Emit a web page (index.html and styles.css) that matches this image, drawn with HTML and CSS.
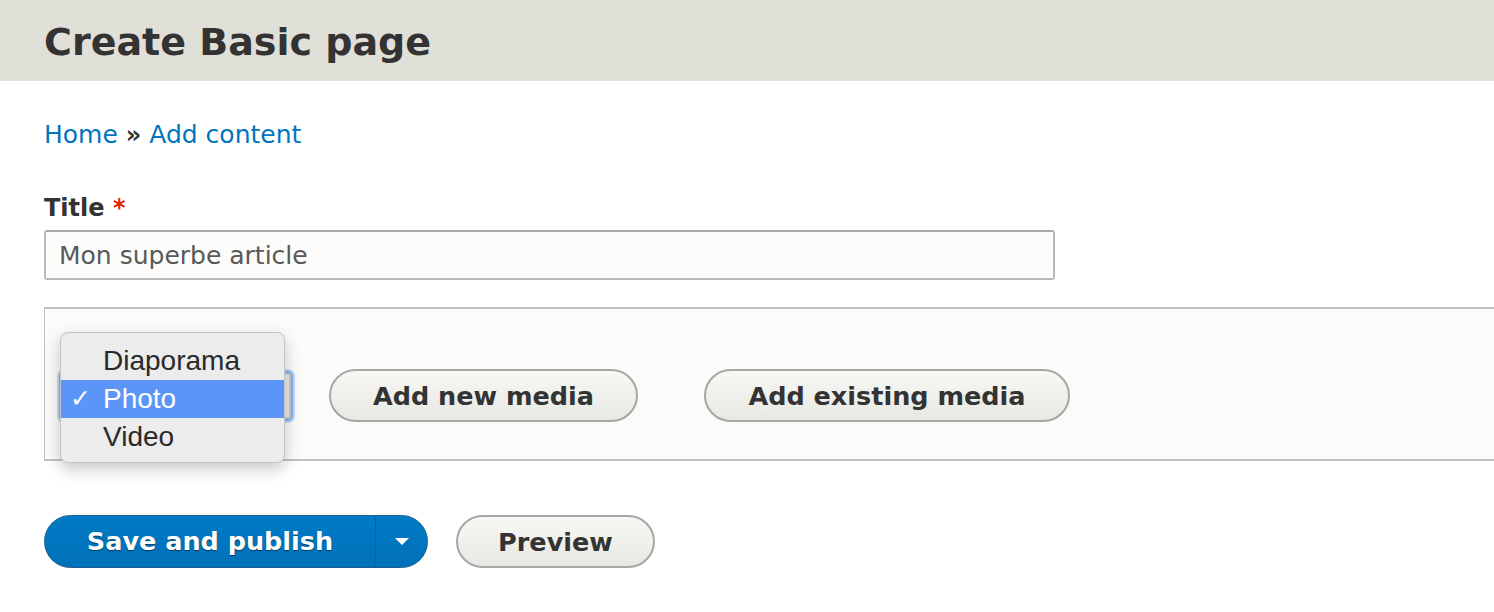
FILE: index.html
```html
<!DOCTYPE html>
<html lang="en">
<head>
<meta charset="utf-8">
<title>Create Basic page</title>
<link rel="stylesheet" href="styles.css">
</head>
<body>
<header class="page-header">
  <h1 class="page-title">Create Basic page</h1>
</header>
<main class="content">
  <nav class="breadcrumb"><a href="#">Home</a> <span class="sep">»</span> <a href="#">Add content</a></nav>
  <div class="form-item">
    <label class="form-label">Title <span class="required">*</span></label>
    <div class="text-input">Mon superbe article</div>
  </div>
  <div class="media-panel">
    <div class="media-row">
      <div class="fake-select"></div>
      <button class="btn">Add new media</button>
      <button class="btn btn-existing">Add existing media</button>
    </div>
    <ul class="popup-menu">
      <li class="popup-item">Diaporama</li>
      <li class="popup-item selected"><span class="check">✓</span>Photo</li>
      <li class="popup-item">Video</li>
    </ul>
  </div>
  <div class="actions">
    <div class="split-button">
      <span class="split-main">Save and publish</span>
      <span class="split-toggle"><span class="caret"></span></span>
    </div>
    <button class="btn btn-preview">Preview</button>
  </div>
</main>
</body>
</html>
```
FILE: styles.css
```css
html, body {
  margin: 0;
  padding: 0;
  background: #ffffff;
  overflow: hidden;
}
body {
  font-family: "DejaVu Sans", "Liberation Sans", sans-serif;
  color: #333333;
}
.page-header {
  background: #e0e0d8;
  height: 81px;
  padding-left: 44px;
  box-sizing: border-box;
}
.page-title {
  margin: 0;
  font-size: 38px;
  font-weight: bold;
  line-height: 84px;
  color: #333333;
}
.content {
  padding-left: 44px;
}
.breadcrumb {
  font-size: 25px;
  line-height: 30px;
  padding-top: 39px;
  color: #333;
}
.breadcrumb a {
  color: #0074bd;
  text-decoration: none;
}
.breadcrumb .sep {
  font-size: 24px;
  font-weight: bold;
}
.form-item {
  margin-top: 43px;
}
.form-label {
  display: block;
  font-size: 24px;
  font-weight: bold;
  line-height: 30px;
  margin-bottom: 7px;
}
.required {
  color: #e62600;
}
.text-input {
  width: 1011px;
  height: 50px;
  box-sizing: border-box;
  border: 2px solid #b8b8b8;
  border-top-color: #a9a9a9;
  border-radius: 3px;
  background: #fcfcfa;
  padding: 0 13px;
  font-size: 25px;
  line-height: 48px;
  color: #595959;
}
.media-panel {
  position: relative;
  margin-top: 27px;
  margin-right: -10px;
  height: 154px;
  box-sizing: border-box;
  border: 2px solid #c0c0c0;
  border-right: none;
  border-left-width: 1px;
  background: #fbfbf9;
}
.media-row {
  display: flex;
  align-items: center;
  height: 100%;
  box-sizing: border-box;
  padding-left: 16px;
  padding-top: 23px;
}
.fake-select {
  width: 230px;
  height: 46px;
  box-sizing: border-box;
  border: 2px solid #c8c8c8;
  border-radius: 3px;
  background: #e8e8e6;
  box-shadow: 0 0 0 2px #7eb0f0, 0 0 0 4px rgba(126, 176, 240, 0.45);
  margin-right: 38px;
}
.btn {
  font-family: inherit;
  font-size: 25.5px;
  font-weight: bold;
  color: #333;
  height: 53px;
  box-sizing: border-box;
  border: 2px solid #a6a6a6;
  border-radius: 27px;
  background: linear-gradient(#f7f7f4, #e8e8e3);
  padding: 0;
  cursor: pointer;
}
.media-row .btn {
  width: 309px;
}
.media-row .btn-existing {
  width: 366px;
  margin-left: 66px;
}
.popup-menu {
  position: absolute;
  left: 15px;
  top: 23px;
  width: 225px;
  height: 131px;
  box-sizing: border-box;
  margin: 0;
  padding: 9px 0 0;
  list-style: none;
  background: #ececec;
  border: 1px solid #c4c4c4;
  border-radius: 8px;
  box-shadow: 0 6px 16px rgba(0, 0, 0, 0.22);
  font-family: "Liberation Sans", Arial, sans-serif;
  font-size: 28px;
}
.popup-item {
  position: relative;
  height: 38px;
  line-height: 38px;
  padding-left: 42px;
  color: #2a2a2a;
}
.popup-item.selected {
  background: #5b95f7;
  color: #ffffff;
}
.check {
  position: absolute;
  left: 9px;
  top: 0;
  font-family: "DejaVu Sans", sans-serif;
  font-size: 25px;
  font-weight: bold;
}
.actions {
  display: flex;
  align-items: center;
  margin-top: 54px;
}
.split-button {
  display: flex;
  height: 53px;
  box-sizing: border-box;
  border: 1px solid #1e5c90;
  border-radius: 27px;
  background: linear-gradient(#007bc6, #0071b8);
  color: #ffffff;
  font-size: 25.5px;
  font-weight: bold;
  overflow: hidden;
  text-shadow: 0 1px 1px rgba(0, 0, 0, 0.5);
}
.split-main {
  width: 331px;
  box-sizing: border-box;
  line-height: 51px;
  text-align: center;
  border-right: 1px solid #1e5c90;
}
.split-toggle {
  width: 51px;
  display: flex;
  align-items: center;
  justify-content: center;
}
.caret {
  width: 0;
  height: 0;
  border-left: 7px solid transparent;
  border-right: 7px solid transparent;
  border-top: 7px solid #ffffff;
}
.btn-preview {
  width: 199px;
  margin-left: 28px;
}
```
